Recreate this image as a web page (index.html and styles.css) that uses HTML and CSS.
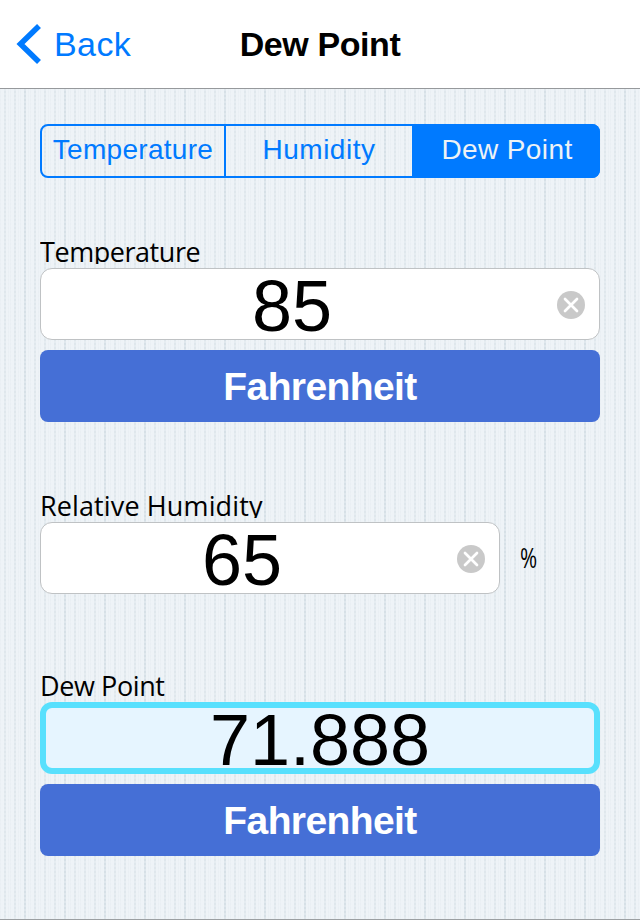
FILE: index.html
```html
<!DOCTYPE html>
<html lang="en">
<head>
  <meta charset="UTF-8" />
  <meta name="viewport" content="width=device-width, initial-scale=1.0"/>
  <title>Dew Point</title>
  <link rel="stylesheet" href="styles.css">
</head>
<body>

  <header class="navbar">
    <a class="back">
      <svg class="chevron" width="26" height="42" viewBox="0 0 26 42">
        <path d="M23 3 L4.5 21 L23 39" fill="none" stroke="#007aff" stroke-width="5.6"/>
      </svg>
      <span class="back-text">Back</span>
    </a>
    <h1>Dew Point</h1>
  </header>

  <main class="content">
    <nav class="tabs">
      <div class="tab tab-temperature">Temperature</div>
      <div class="tab tab-humidity">Humidity</div>
      <div class="tab tab-dew active">Dew Point</div>
    </nav>

    <section class="group">
      <div class="label label-temperature">Temperature</div>
      <div class="field">
        <span class="value">85</span>
        <svg class="clear" width="28" height="28" viewBox="0 0 28 28">
          <circle cx="14" cy="14" r="14" fill="#c9c9c9"/>
          <path d="M8 8 L20 20 M20 8 L8 20" stroke="#fff" stroke-width="2.7" stroke-linecap="round"/>
        </svg>
      </div>
      <div class="button">Fahrenheit</div>
    </section>

    <section class="group">
      <div class="label label-humidity">Relative Humidity</div>
      <div class="row">
        <div class="field">
          <span class="value">65</span>
          <svg class="clear" width="28" height="28" viewBox="0 0 28 28">
            <circle cx="14" cy="14" r="14" fill="#c9c9c9"/>
            <path d="M8 8 L20 20 M20 8 L8 20" stroke="#fff" stroke-width="2.7" stroke-linecap="round"/>
          </svg>
        </div>
        <span class="percent">%</span>
      </div>
    </section>

    <section class="group">
      <div class="label label-dew">Dew Point</div>
      <div class="field result">
        <span class="value">71.888</span>
      </div>
      <div class="button">Fahrenheit</div>
    </section>
  </main>

</body>
</html>
```
FILE: styles.css
```css
* {
  box-sizing: border-box;
}

body {
  margin: 0;
  height: 920px;
  overflow: hidden;
  display: flex;
  flex-direction: column;
  font-family: "Liberation Sans", Arial, sans-serif;
  color: #000;
  white-space: nowrap;
}

.navbar {
  height: 89px;
  background: #fff;
  border-bottom: 1px solid #96999c;
  display: grid;
  grid-template-columns: 1fr auto 1fr;
  align-items: center;
}

.back {
  display: flex;
  align-items: center;
  padding-left: 16px;
  color: #007aff;
  font-size: 34px;
  letter-spacing: 0.4px;
}

.back-text {
  margin-left: 12px;
}

h1 {
  margin: 0;
  font-size: 34px;
  font-weight: bold;
  letter-spacing: -0.4px;
}

/* knitted stripes, one darker thread every 40px */
.content {
  flex: 1;
  padding: 35px 40px 0;
  border-bottom: 1px solid #9b9fa2;
  background-color: #eef3f7;
  background-image:
    repeating-linear-gradient(to bottom, rgba(238, 243, 247, 0.4) 0 2px, transparent 2px 4px),
    linear-gradient(to right, transparent 24px, #d6e0e6 24px 26px, transparent 26px),
    linear-gradient(to right, transparent 4px, #dfe7ec 4px 6px, transparent 6px),
    linear-gradient(to right, #e9eff3 1px, transparent 1px 8px, #e9eff3 8px 9px, transparent 9px);
  background-size: 4px 4px, 40px 4px, 10px 4px, 10px 4px;
}

.tabs {
  display: flex;
  height: 54px;
  border: 2px solid #007aff;
  border-radius: 8px;
}

.tab {
  color: #007aff;
  font-size: 28px;
  line-height: 48px;
  text-align: center;
}

.tab-temperature {
  width: 184px;
  border-right: 2px solid #007aff;
  letter-spacing: 0.3px;
}

.tab-humidity {
  width: 186px;
  letter-spacing: 0.5px;
}

.tab-dew {
  flex: 1;
  margin: -2px -2px -2px 0;
  padding: 2px 0 0 2px;
  border-radius: 0 8px 8px 0;
  letter-spacing: 0.4px;
}

.tab.active {
  background: #007aff;
  color: #edf2f6;
}

.group {
  height: 180px;
}

.group:nth-of-type(1) {
  height: 254px;
  margin-top: 60px;
}

.label {
  height: 26px;
  margin-bottom: 4px;
  overflow: hidden;
  font-family: "Open Sans", "Noto Sans", sans-serif;
  font-size: 27px;
  line-height: 28px;
}

.label-temperature {
  letter-spacing: -0.45px;
}

.label-humidity {
  letter-spacing: 0.12px;
}

.label-dew {
  overflow: visible;
  letter-spacing: -0.4px;
}

.row {
  display: flex;
  align-items: center;
}

.row .field {
  width: 460px;
}

.field {
  height: 72px;
  display: flex;
  align-items: center;
  padding-right: 14px;
  background: #fff;
  border: 1px solid #bfc2c4;
  border-radius: 12px;
}

.value {
  flex: 1;
  padding: 3px 14px 0 0;
  font-size: 72px;
  line-height: 70px;
  text-align: center;
}

.field .clear {
  margin-top: 2px;
}

.result {
  padding: 0;
  background: #e6f5ff;
  border: 6px solid #58e0fd;
}

.result .value {
  padding-right: 0;
}

.percent {
  margin-left: 20px;
  font-family: "Open Sans", "Noto Sans", sans-serif;
  font-size: 27px;
  line-height: 36px;
  transform: scaleX(0.77);
  transform-origin: left;
}

.button {
  height: 72px;
  margin-top: 10px;
  padding-top: 1px;
  background: #456fd6;
  color: #fff;
  border-radius: 8px;
  font-size: 39px;
  font-weight: bold;
  letter-spacing: -0.6px;
  line-height: 72px;
  text-align: center;
}
```
